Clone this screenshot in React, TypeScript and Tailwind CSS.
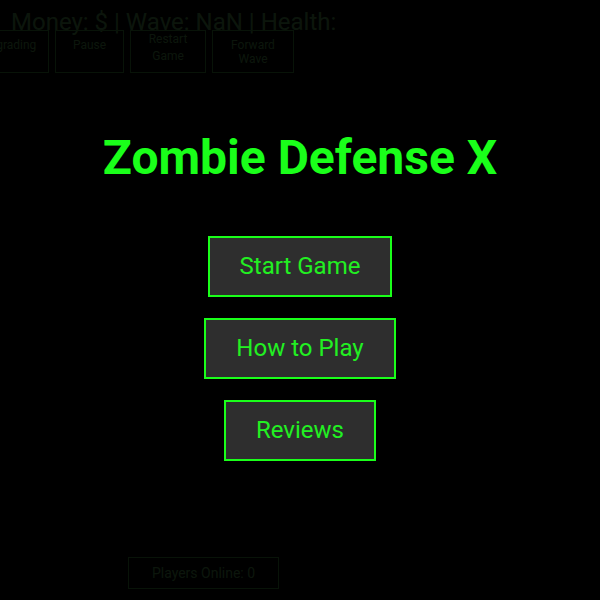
const controls = [
  { label: 'Upgrading', cls: 'w-[80px] pt-[7px] leading-[14px]' },
  { label: 'Pause', cls: 'w-[69px] pt-[7px] leading-[14px]' },
  { label: 'Restart Game', cls: 'w-[76px] pt-0 leading-[17px]' },
  { label: 'Forward Wave', cls: 'w-[82px] pt-[7px] leading-[14px]' },
];

const menu = ['Start Game', 'How to Play', 'Reviews'];

export default function App() {
  return (
    <div className="relative h-[600px] w-[600px] overflow-hidden bg-black font-['Roboto',sans-serif]">
      {/* game HUD underneath the menu */}
      <div className="flex h-full flex-col">
        <div className="ml-[11px] mt-[8px] whitespace-nowrap text-[24px] leading-[28px] text-[#78d878]">
          Money: $ | Wave: NaN | Health:
        </div>
        <div className="-mt-[6px] ml-[-31px] flex gap-[6px]">
          {controls.map((c) => (
            <div
              key={c.label}
              className={`${c.cls} flex h-[43px] items-start justify-center border border-[#4fbf4f] px-2 text-center text-[12px] text-[#78d878]`}
            >
              {c.label}
            </div>
          ))}
        </div>
        <div className="mt-auto mb-[11px] ml-[128px] flex h-[32px] w-[151px] items-center justify-center border border-[#4fbf4f] text-[14px] text-[#78d878]">
          Players Online: 0
        </div>
      </div>

      {/* start menu overlay */}
      <div className="absolute inset-0 flex flex-col items-center bg-black/90 pt-[130px]">
        <h1 className="text-[48px] font-bold leading-[56px] text-[#1aff1a]">Zombie Defense X</h1>
        <div className="mt-[50px] flex flex-col items-center gap-[21px]">
          {menu.map((m) => (
            <button
              key={m}
              className="border-2 border-[#1aff1a] bg-[#2e2e2e] px-[30px] py-[15px] text-[24px] leading-[27px] text-[#22f022]"
            >
              {m}
            </button>
          ))}
        </div>
      </div>
    </div>
  );
}
